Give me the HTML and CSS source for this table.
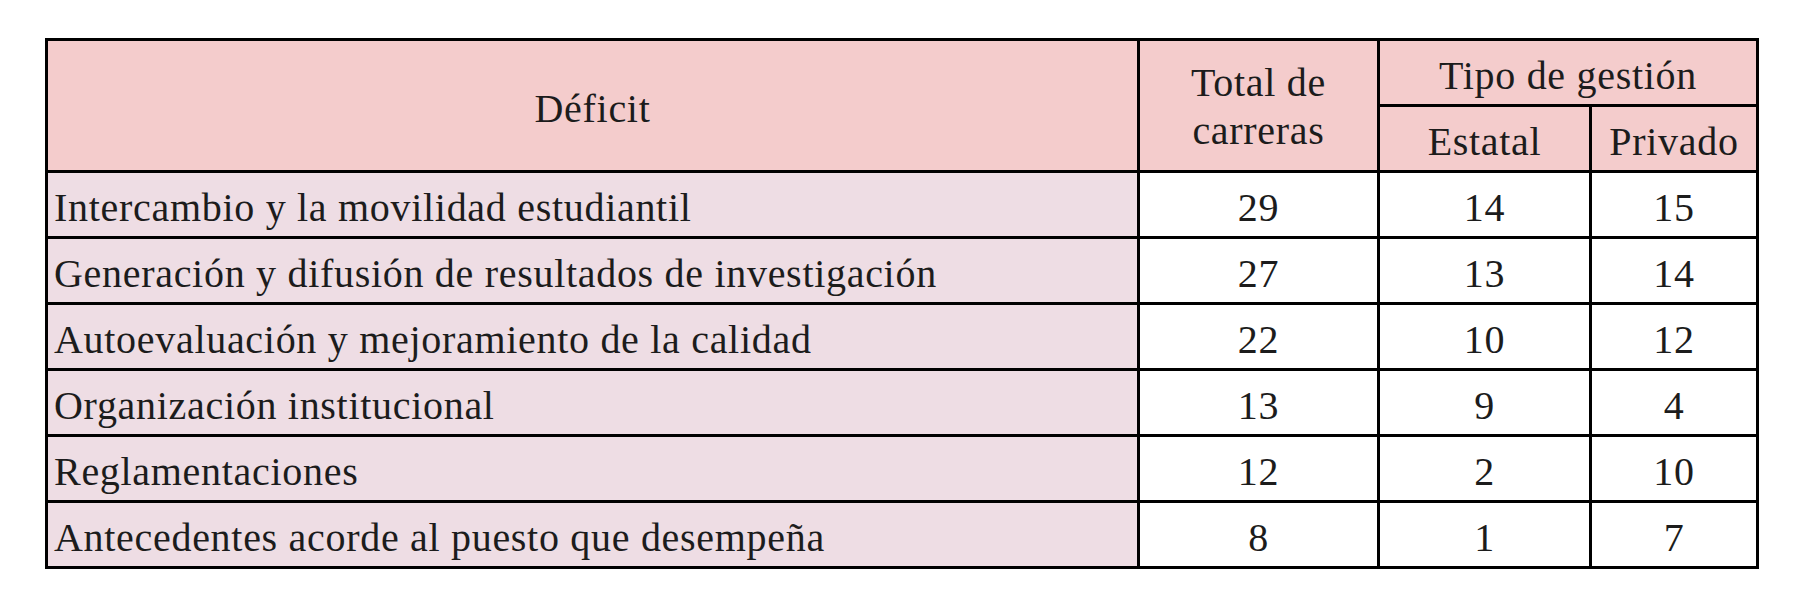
FILE: index.html
```html
<!DOCTYPE html>
<html lang="es">
<head>
<meta charset="utf-8">
<link rel="stylesheet" href="styles.css">
</head>
<body>
<div class="tabla">
  <div class="cell hd span-rows">Déficit</div>
  <div class="cell hd span-rows two-lines">Total de<br>carreras</div>
  <div class="cell hd span-cols">Tipo de gestión</div>
  <div class="cell hd">Estatal</div>
  <div class="cell hd">Privado</div>

  <div class="cell name">Intercambio y la movilidad estudiantil</div>
  <div class="cell num">29</div>
  <div class="cell num">14</div>
  <div class="cell num">15</div>

  <div class="cell name">Generación y difusión de resultados de investigación</div>
  <div class="cell num">27</div>
  <div class="cell num">13</div>
  <div class="cell num">14</div>

  <div class="cell name">Autoevaluación y mejoramiento de la calidad</div>
  <div class="cell num">22</div>
  <div class="cell num">10</div>
  <div class="cell num">12</div>

  <div class="cell name">Organización institucional</div>
  <div class="cell num">13</div>
  <div class="cell num">9</div>
  <div class="cell num">4</div>

  <div class="cell name">Reglamentaciones</div>
  <div class="cell num">12</div>
  <div class="cell num">2</div>
  <div class="cell num">10</div>

  <div class="cell name">Antecedentes acorde al puesto que desempeña</div>
  <div class="cell num">8</div>
  <div class="cell num">1</div>
  <div class="cell num">7</div>
</div>
</body>
</html>
```

FILE: styles.css
```css
html, body {
  margin: 0;
  padding: 0;
  background: #ffffff;
}

body {
  padding: 38px 0 0 45px;
  font-family: "Liberation Serif", serif;
  font-size: 40px;
  color: #1c1c1c;
}

.tabla {
  display: grid;
  grid-template-columns: 1089px 237px 209px 164px;
  grid-template-rows: repeat(8, 63px);
  gap: 3px;
  padding: 3px;
  width: max-content;
  background: #000000;
  letter-spacing: 0.7px;
}

.cell {
  display: flex;
  align-items: center;
  justify-content: center;
  text-align: center;
  line-height: 1.2;
  white-space: nowrap;
  padding-top: 6px;
}

.hd {
  background: #f4cccc;
}

.span-rows {
  grid-row: span 2;
}

.span-cols {
  grid-column: span 2;
}

.two-lines {
  line-height: 48px;
  padding-top: 2px;
}

.name {
  justify-content: flex-start;
  text-align: left;
  padding-left: 6px;
  background: #eedde4;
}

.num {
  background: #ffffff;
}
```
